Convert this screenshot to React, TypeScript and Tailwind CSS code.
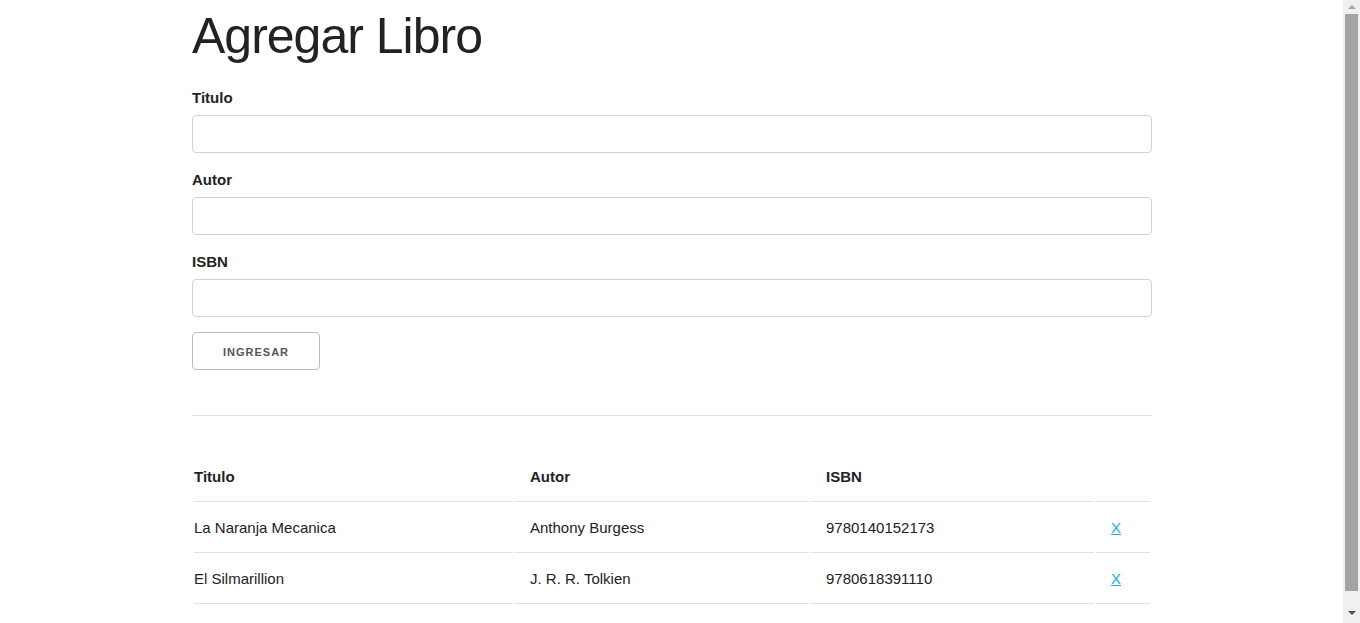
import React from "react";

type Book = {
  titulo: string;
  autor: string;
  isbn: string;
};

const books: Book[] = [
  { titulo: "La Naranja Mecanica", autor: "Anthony Burgess", isbn: "9780140152173" },
  { titulo: "El Silmarillion", autor: "J. R. R. Tolkien", isbn: "9780618391110" },
];

const Field: React.FC<{ label: string }> = ({ label }) => {
  return (
    <div>
      <label className="mb-[5px] block font-bold">{label}</label>
      <input
        type="text"
        className="mb-[15px] block h-[38px] w-full rounded-[4px] border border-[#D1D1D1] bg-white px-[10px] py-[6px] outline-none"
      />
    </div>
  );
};

const Scrollbar: React.FC = () => {
  return (
    <div className="flex w-[17px] shrink-0 flex-col items-center bg-[#f0f0f0]">
      <div className="mt-[5px] h-0 w-0 border-x-[4px] border-b-[4px] border-x-transparent border-b-[#a3a3a3]" />
      <div className="mt-[5px] h-[577px] w-[13px] bg-[#a3a3a3]" />
      <div className="mt-[20px] h-0 w-0 border-x-[4px] border-t-[4px] border-x-transparent border-t-[#505050]" />
    </div>
  );
};

export default function App() {
  return (
    <div className="flex h-screen overflow-hidden bg-white font-['Liberation_Sans',Arial,sans-serif] text-[15px] leading-[1.6] text-[#222]">
      <div className="flex-1 overflow-hidden">
        <div className="ml-[192px] w-[960px] pt-[6px]">
          <h1 className="mb-5 text-[50px] leading-[1.2] font-light tracking-[-1px]">Agregar Libro</h1>

          <form>
            <Field label="Titulo" />
            <Field label="Autor" />
            <Field label="ISBN" />
            <button
              type="button"
              className="block h-[38px] rounded-[4px] border border-[#bbb] bg-transparent px-[30px] text-[11px] leading-[38px] font-bold tracking-[1px] text-[#555] uppercase"
            >
              Ingresar
            </button>
          </form>

          <hr className="mt-[45px] mb-[35px] border-t border-[#E1E1E1]" />

          <table className="w-full table-fixed border-separate border-spacing-[2px] text-left">
            <thead>
              <tr>
                <th className="w-[319px] border-b border-[#E1E1E1] py-3 pr-[15px] pl-0 font-bold">Titulo</th>
                <th className="w-[294px] border-b border-[#E1E1E1] px-[15px] py-3 font-bold">Autor</th>
                <th className="w-[283px] border-b border-[#E1E1E1] px-[15px] py-3 font-bold">ISBN</th>
                <th className="w-[54px] border-b border-[#E1E1E1] py-3 pr-0 pl-[15px]"></th>
              </tr>
            </thead>
            <tbody>
              {books.map((b) => (
                <tr key={b.isbn}>
                  <td className="border-b border-[#E1E1E1] py-3 pr-[15px] pl-0">{b.titulo}</td>
                  <td className="border-b border-[#E1E1E1] px-[15px] py-3">{b.autor}</td>
                  <td className="border-b border-[#E1E1E1] px-[15px] py-3">{b.isbn}</td>
                  <td className="border-b border-[#E1E1E1] py-3 pr-0 pl-[15px]">
                    <a href="#" className="text-[#1EAEDB] underline">
                      X
                    </a>
                  </td>
                </tr>
              ))}
            </tbody>
          </table>
        </div>
      </div>
      <Scrollbar />
    </div>
  );
}
